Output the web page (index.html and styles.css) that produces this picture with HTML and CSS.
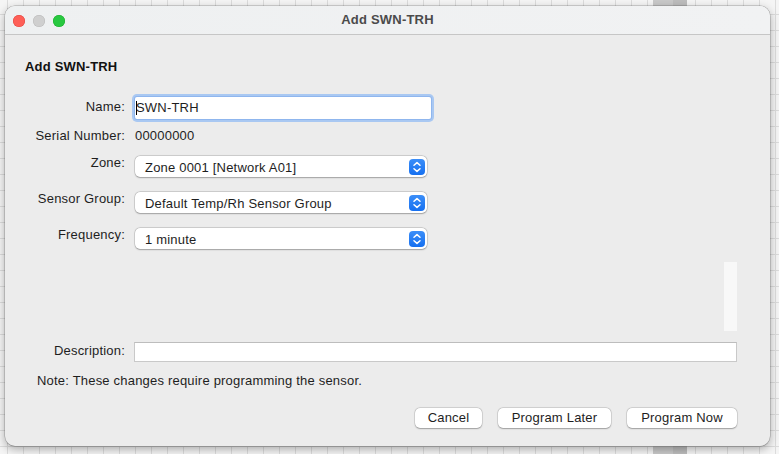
FILE: index.html
```html
<!DOCTYPE html>
<html>
<head>
<meta charset="utf-8">
<link rel="stylesheet" href="styles.css">
</head>
<body>
<div class="desktop">
  <div class="desk-block"></div>
  <div class="window">
    <div class="titlebar">
      <div class="lights">
        <span class="light red"></span>
        <span class="light gray"></span>
        <span class="light green"></span>
      </div>
      <div class="title">Add SWN-TRH</div>
    </div>
    <div class="content">
      <div class="heading">Add SWN-TRH</div>

      <div class="row row-name">
        <div class="label">Name:</div>
        <div class="field">
          <div class="textbox focused"><span class="caret"></span>SWN-TRH</div>
        </div>
      </div>

      <div class="row row-serial">
        <div class="label">Serial Number:</div>
        <div class="field value">00000000</div>
      </div>

      <div class="row row-select first-select">
        <div class="label">Zone:</div>
        <div class="field">
          <div class="select">
            <span class="select-text">Zone 0001 [Network A01]</span>
            <span class="stepper"><svg width="16" height="16" viewBox="0 0 16 16"><path d="M5 6.3 L8 3.6 L11 6.3" fill="none" stroke="#fff" stroke-width="1.5" stroke-linecap="round" stroke-linejoin="round"/><path d="M5 9.7 L8 12.4 L11 9.7" fill="none" stroke="#fff" stroke-width="1.5" stroke-linecap="round" stroke-linejoin="round"/></svg></span>
          </div>
        </div>
      </div>

      <div class="row row-select">
        <div class="label">Sensor Group:</div>
        <div class="field">
          <div class="select">
            <span class="select-text">Default Temp/Rh Sensor Group</span>
            <span class="stepper"><svg width="16" height="16" viewBox="0 0 16 16"><path d="M5 6.3 L8 3.6 L11 6.3" fill="none" stroke="#fff" stroke-width="1.5" stroke-linecap="round" stroke-linejoin="round"/><path d="M5 9.7 L8 12.4 L11 9.7" fill="none" stroke="#fff" stroke-width="1.5" stroke-linecap="round" stroke-linejoin="round"/></svg></span>
          </div>
        </div>
      </div>

      <div class="row row-select">
        <div class="label">Frequency:</div>
        <div class="field">
          <div class="select">
            <span class="select-text">1 minute</span>
            <span class="stepper"><svg width="16" height="16" viewBox="0 0 16 16"><path d="M5 6.3 L8 3.6 L11 6.3" fill="none" stroke="#fff" stroke-width="1.5" stroke-linecap="round" stroke-linejoin="round"/><path d="M5 9.7 L8 12.4 L11 9.7" fill="none" stroke="#fff" stroke-width="1.5" stroke-linecap="round" stroke-linejoin="round"/></svg></span>
          </div>
        </div>
      </div>

      <div class="spacer-row">
        <div class="scroll-track"></div>
      </div>

      <div class="row row-desc">
        <div class="label">Description:</div>
        <div class="field">
          <div class="textbox plain"></div>
        </div>
      </div>

      <div class="note">Note: These changes require programming the sensor.</div>

      <div class="buttons">
        <button class="btn btn-cancel">Cancel</button>
        <button class="btn btn-later">Program Later</button>
        <button class="btn btn-now">Program Now</button>
      </div>
    </div>
  </div>
</div>
</body>
</html>
```

FILE: styles.css
```css
* { box-sizing: border-box; }

html, body {
  margin: 0;
  padding: 0;
  width: 779px;
  height: 454px;
  overflow: hidden;
}

body {
  font-family: "Liberation Sans", Arial, sans-serif;
  font-size: 13px;
  letter-spacing: 0.2px;
  color: #1e1e1e;
  background-color: #f5f5f5;
  background-image:
    repeating-linear-gradient(90deg, transparent 0 7px, #dcdcdc 7px 8px, transparent 8px 16px),
    repeating-linear-gradient(0deg, transparent 0 7px, #dcdcdc 7px 8px, transparent 8px 16px);
}

.desktop {
  position: relative;
  padding: 6px 9px 0 5px;
}

.desk-block {
  position: absolute;
  left: 653px;
  top: 0;
  width: 34px;
  height: 454px;
  background: linear-gradient(90deg, #c9c9c9 0 20px, #bdbdbd 20px);
}

.window {
  position: relative;
  width: 765px;
  height: 440px;
  border-radius: 10px;
  background: #ececec;
  box-shadow: 0 0 0 0.5px rgba(0,0,0,0.28), 0 3px 10px rgba(0,0,0,0.32);
  overflow: hidden;
}

.titlebar {
  position: relative;
  height: 29px;
  background: linear-gradient(90deg, #eef0f1, #f1f2f3);
  border-bottom: 1px solid #c6c6c6;
  display: flex;
  align-items: center;
  justify-content: center;
}

.lights {
  position: absolute;
  left: 8px;
  top: 9px;
  display: flex;
  gap: 8px;
}

.light {
  width: 12px;
  height: 12px;
  border-radius: 50%;
  display: block;
}
.light.red { background: #fe5f57; box-shadow: inset 0 0 0 0.5px #e0443e; }
.light.gray { background: #cfcfcf; box-shadow: inset 0 0 0 0.5px #b9b9b9; }
.light.green { background: #28c840; box-shadow: inset 0 0 0 0.5px #1aab29; }

.title {
  font-weight: bold;
  font-size: 13px;
  color: #4b4b4b;
  line-height: 16px;
}

.content {
  padding: 24px 33px 0 20px;
}

.heading {
  font-weight: bold;
  font-size: 13px;
  line-height: 16px;
  height: 16px;
  color: #111;
}

.row {
  display: flex;
  align-items: flex-start;
}

.label {
  width: 100px;
  text-align: right;
  line-height: 16px;
  flex: none;
  white-space: nowrap;
}

.field {
  margin-left: 10px;
  flex: 1;
}

.row-name { margin-top: 22px; height: 22px; }
.row-name .label { padding-top: 2px; }

.textbox {
  background: #fff;
  height: 22px;
  line-height: 22px;
  position: relative;
}

.textbox.focused {
  width: 296px;
  padding-left: 1px;
  border-radius: 2px;
  box-shadow: 0 0 0 1px #8fb6ee, 0 0 0 3px #a9c8f2;
}

.caret {
  position: absolute;
  left: 1px;
  top: 4px;
  width: 1px;
  height: 14px;
  background: #000;
}

.row-serial { margin-top: 9px; height: 16px; }
.value { line-height: 16px; }

.row-select { margin-top: 15px; height: 21px; }
.row-select.first-select { margin-top: 12px; }
.row-select .label { padding-top: 0; margin-top: -1px; }

.select {
  width: 292px;
  height: 21px;
  background: #fff;
  border-radius: 5px;
  box-shadow: 0 0 0 0.5px rgba(0,0,0,0.18), 0 0.5px 1.5px rgba(0,0,0,0.25);
  display: flex;
  align-items: center;
  justify-content: space-between;
  padding: 0 2px 0 10px;
}

.select-text {
  line-height: 16px;
  padding-top: 2px;
}

.stepper {
  width: 16px;
  height: 16px;
  border-radius: 4px;
  background: linear-gradient(#3b8ef8, #1670f0);
  display: flex;
}

.spacer-row {
  margin-top: 13px;
  height: 69px;
  display: flex;
  justify-content: flex-end;
}

.scroll-track {
  width: 13px;
  height: 69px;
  background: #f8f8f8;
}

.row-desc { margin-top: 11px; height: 20px; }
.row-desc .field { margin-left: 9px; }
.row-desc .label { padding-top: 1px; }

.textbox.plain {
  height: 20px;
  border: 1px solid #c9c9c9;
  border-top-color: #bdbdbd;
}

.note {
  margin-top: 11px;
  margin-left: 12px;
  line-height: 16px;
}

.buttons {
  margin-top: 19px;
  display: flex;
  justify-content: flex-end;
  gap: 16px;
}

.btn {
  font-family: inherit;
  font-size: 13px;
  letter-spacing: 0.2px;
  color: #1e1e1e;
  height: 20px;
  line-height: 20px;
  padding: 0;
  border: none;
  background: #fff;
  border-radius: 5px;
  box-shadow: 0 0 0 0.5px rgba(0,0,0,0.15), 0 0.5px 1.5px rgba(0,0,0,0.28);
  text-align: center;
}
.btn-cancel { width: 67px; }
.btn-later { width: 113px; }
.btn-now { width: 110px; }
```
